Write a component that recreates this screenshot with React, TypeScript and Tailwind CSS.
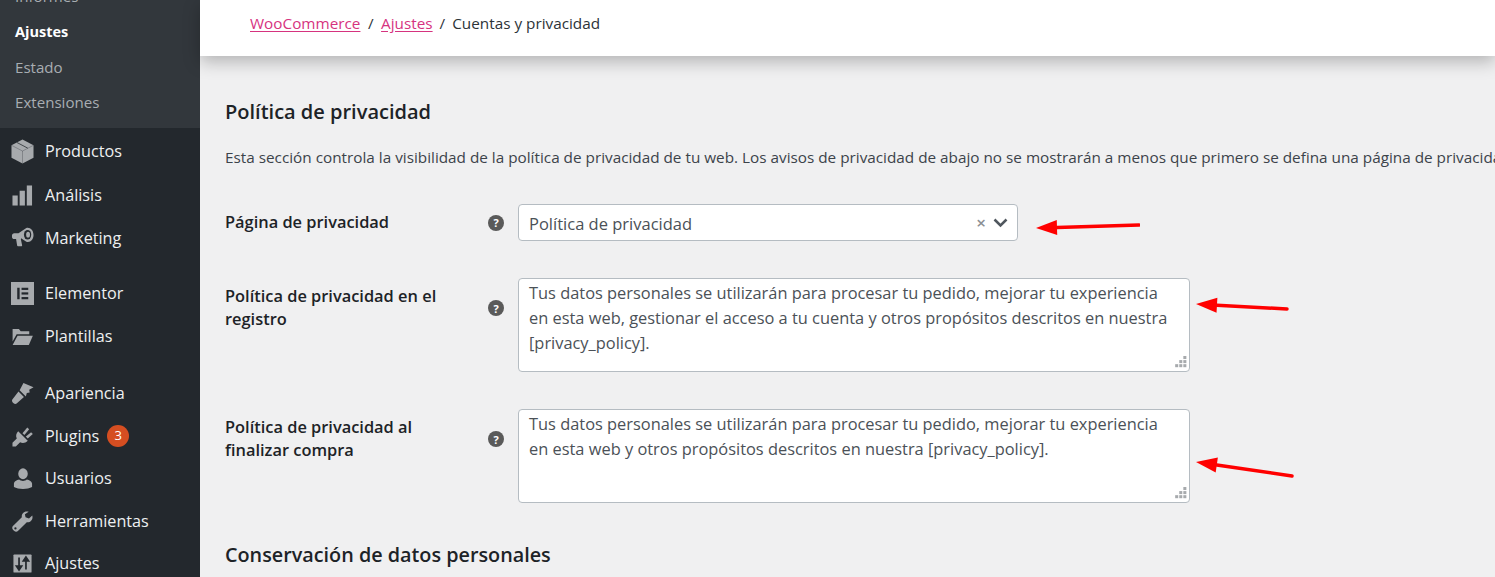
const font = { fontFamily: '"Open Sans", "Noto Sans", sans-serif' }

type IconProps = { className?: string }

function BoxIcon({ className }: IconProps) {
  return (
    <svg viewBox="0 0 24 26" className={className} fill="currentColor">
      <path d="M12 0.500 23.500 6.500V19.500L12 25.500 0.500 19.500V6.500Z" />
      <path d="M0.500 6.500 12 12.500 23.500 6.500M12 12.500V25.500" stroke="#23282d" strokeWidth="0.500" fill="none" opacity="0.6" />
      <path d="M6 3.500 17.500 9.500" stroke="#23282d" strokeWidth="0.800" fill="none" />
    </svg>
  )
}

function BarsIcon({ className }: IconProps) {
  return (
    <svg viewBox="0 0 22 22" className={className} fill="currentColor">
      <rect x="0.500" y="11" width="5.500" height="10.500" />
      <rect x="8" y="6" width="5.500" height="15.500" />
      <rect x="15.500" y="0.500" width="5.500" height="21" />
    </svg>
  )
}

function MegaphoneIcon({ className }: IconProps) {
  return (
    <svg viewBox="0 0 24 24" className={className} fill="currentColor">
      <path d="M1 9.500c0-1.400 1-2.400 2.400-2.400h4.400L16 1.500C20 .5 23.500 4 23.500 8.800s-3.500 8.300-7.500 7L10.500 12.300l-.2 1 1.300 6.200c.1.600-.3 1-.9 1H7.300c-.5 0-.8-.3-.9-.7L5.300 13H3.400C2 13 1 12 1 10.600Z" />
      <ellipse cx="17.300" cy="8.600" rx="3.800" ry="5" fill="#23282d" />
      <ellipse cx="17.800" cy="8.600" rx="2" ry="3" />
    </svg>
  )
}

function ElementorIcon({ className }: IconProps) {
  return (
    <svg viewBox="0 0 24 24" className={className}>
      <rect x="0" y="0" width="24" height="24" fill="currentColor" />
      <rect x="6.500" y="6" width="2.500" height="12" fill="#23282d" />
      <rect x="11" y="6" width="7" height="2.300" fill="#23282d" />
      <rect x="11" y="10.800" width="7" height="2.300" fill="#23282d" />
      <rect x="11" y="15.700" width="7" height="2.300" fill="#23282d" />
    </svg>
  )
}

function FolderIcon({ className }: IconProps) {
  return (
    <svg viewBox="0 0 24 20" className={className} fill="currentColor">
      <path d="M1 1h7l2 2.500h9.500V7H5.500L1 15Z" />
      <path d="M6.500 8.500H23.500L19 19H1Z" />
    </svg>
  )
}

function BrushIcon({ className }: IconProps) {
  return (
    <svg viewBox="0 0 24 24" className={className} fill="currentColor">
      <path d="M13 1 23.500 5.500 19 8l.5 3-3 .5-1 3.500-6.500-6.500Z" />
      <path d="M7.800 10 13.500 15.700 6.200 22.300c-1 .9-2.500.9-3.500-.1l-.9-.9c-1-1-1-2.500 0-3.500Z" />
    </svg>
  )
}

function PlugIcon({ className }: IconProps) {
  return (
    <svg viewBox="0 0 22 22" className={className} fill="currentColor">
      <path d="M6.500 5.500 16.500 15.500c-2.500 2.500-5.500 3-8 1.500L4 21.500H0.500V17.500L5 13C3.700 10.500 4.300 7.700 6.500 5.500Z" />
      <path d="M11 7.500 16 1.500 18 3.500 13 9.500Z" />
      <path d="M14.500 11 20 6.500 21.800 8.500 16.500 13Z" />
    </svg>
  )
}

function UserIcon({ className }: IconProps) {
  return (
    <svg viewBox="0 0 20 22" className={className} fill="currentColor">
      <ellipse cx="10" cy="6" rx="5" ry="5.700" />
      <path d="M0.500 20v-3.500C0.500 14 3.500 12.500 6 12c1.200 1 2.500 1.500 4 1.500s2.800-.5 4-1.500c2.500.5 5.500 2 5.500 4.500V20c-2.500 1.300-5.700 2-9.500 2s-7-.7-9.500-2Z" />
    </svg>
  )
}

function WrenchIcon({ className }: IconProps) {
  return (
    <svg viewBox="0 0 22 22" className={className} fill="currentColor">
      <path d="M15.500 0.500c-3.300 0-5.700 2.800-5.200 6L1 15.800c-1 1-1 2.700 0 3.800l1.400 1.400c1 1 2.800 1 3.800 0l9.300-9.300c3.300.5 6-1.900 6-5.200 0-.7-.1-1.300-.3-1.900L17.800 7.900 14.200 6.600 13.500 3.500 17.500.8C16.900.6 16.200.5 15.500.5Z" />
      <circle cx="3.600" cy="18.300" r="1.200" fill="#23282d" />
    </svg>
  )
}

function SlidersIcon({ className }: IconProps) {
  return (
    <svg viewBox="0 0 22 22" className={className}>
      <rect x="0.500" y="0.500" width="21" height="21" rx="1" fill="currentColor" />
      <path d="M7 4v10M7 18.500 4 14h6Z" stroke="#23282d" strokeWidth="2" fill="#23282d" />
      <path d="M15 18V8M15 3.500 12 8h6Z" stroke="#23282d" strokeWidth="2" fill="#23282d" />
    </svg>
  )
}

function HelpIcon() {
  return (
    <span className="flex h-4 w-4 items-center justify-center rounded-full bg-[#5a5a5a] text-[11px] font-bold leading-none text-white">
      ?
    </span>
  )
}

function Arrow({ className, tip, tail }: { className: string; tip: [number, number]; tail: [number, number] }) {
  // tip/tail in local coordinates, head built from the shaft direction
  const dx = tail[0] - tip[0]
  const dy = tail[1] - tip[1]
  const len = Math.hypot(dx, dy)
  const ux = dx / len
  const uy = dy / len
  const baseX = tip[0] + ux * 21
  const baseY = tip[1] + uy * 21
  const head = `${tip[0]},${tip[1]} ${baseX - uy * 7.500},${baseY + ux * 7.500} ${baseX + uy * 7.500},${baseY - ux * 7.500}`
  return (
    <svg className={className} viewBox="0 0 110 30">
      <line x1={baseX} y1={baseY} x2={tail[0]} y2={tail[1]} stroke="#ff0000" strokeWidth="3.500" strokeLinecap="round" />
      <polygon points={head} fill="#ff0000" />
    </svg>
  )
}

function Grip() {
  return (
    <svg className="absolute bottom-[1px] right-[1px] h-[14px] w-[14px]" viewBox="0 0 12 12" fill="#a7aaad">
      <rect x="8" y="0" width="2.600" height="2.600" />
      <rect x="8" y="3.500" width="2.600" height="2.600" />
      <rect x="4.500" y="3.500" width="2.600" height="2.600" />
      <rect x="8" y="7" width="2.600" height="2.600" />
      <rect x="4.500" y="7" width="2.600" height="2.600" />
      <rect x="1" y="7" width="2.600" height="2.600" />
    </svg>
  )
}

const menu = [
  { label: 'Productos', icon: <BoxIcon className="h-[25px] w-[23px]" />, h: 'h-[44px]' },
  { label: 'Análisis', icon: <BarsIcon className="h-[21px] w-[21px]" />, h: 'h-[44px]' },
  { label: 'Marketing', icon: <MegaphoneIcon className="h-[24px] w-[23px]" />, h: 'h-[42px] mb-[13px]' },
  { label: 'Elementor', icon: <ElementorIcon className="h-[23px] w-[23px]" />, h: 'h-[43px]' },
  { label: 'Plantillas', icon: <FolderIcon className="h-[18px] w-[23px]" />, h: 'h-[43px] mb-[14px]' },
  { label: 'Apariencia', icon: <BrushIcon className="h-[23px] w-[23px]" />, h: 'h-[43px]' },
  { label: 'Plugins', icon: <PlugIcon className="h-[21px] w-[21px]" />, h: 'h-[42px]', badge: '3' },
  { label: 'Usuarios', icon: <UserIcon className="h-[21px] w-[20px]" />, h: 'h-[43px]' },
  { label: 'Herramientas', icon: <WrenchIcon className="h-[21px] w-[21px]" />, h: 'h-[42px]' },
  { label: 'Ajustes', icon: <SlidersIcon className="h-[19px] w-[19px]" />, h: 'h-[43px]' },
]

export default function App() {
  return (
    <div className="flex h-[577px] w-[1495px] overflow-hidden bg-[#f0f0f1] text-[#3c434a]" style={font}>
      <aside className="w-[200px] shrink-0 bg-[#23282d] text-[16.200px]">
        <div className="-mt-[21px] flex h-[149px] flex-col bg-[#32373c] pl-[15px] text-[15.100px] text-[#a8adb2]">
          <div className="flex h-[35px] items-center">Informes</div>
          <div className="flex h-[35px] items-center text-[14.500px] font-bold text-white">Ajustes</div>
          <div className="flex h-[36px] items-center">Estado</div>
          <div className="flex h-[35px] items-center">Extensiones</div>
        </div>
        <nav className="mt-[1px]">
          {menu.map((item) => (
            <div key={item.label} className={`flex items-center text-[#eef0f1] ${item.h}`}>
              <span className="flex w-[45px] justify-center text-[#a7aaad]">{item.icon}</span>
              <span>{item.label}</span>
              {item.badge && (
                <span className="ml-[8px] flex h-[22px] w-[22px] items-center justify-center rounded-full bg-[#d54e21] text-[13px] text-white">
                  {item.badge}
                </span>
              )}
            </div>
          ))}
        </nav>
      </aside>

      <main className="relative min-w-0 flex-1">
        <header className="flex h-[56px] items-center bg-white pb-[10px] pl-[50px] text-[15.300px] text-[#2c3338] shadow-[0_6px_16px_rgba(0,0,0,0.25)]">
          <a className="text-[#d6337f] underline underline-offset-2">WooCommerce</a>
          <span className="mx-[7.500px]">/</span>
          <a className="text-[#d6337f] underline underline-offset-2">Ajustes</a>
          <span className="mx-[7px]">/</span>
          <span>Cuentas y privacidad</span>
        </header>

        <div className="pl-[25px]">
          <h2 className="mt-[41px] text-[20px] font-semibold leading-[30px] text-[#1d2327]">Política de privacidad</h2>
          <p className="mt-[20px] whitespace-nowrap text-[15.300px] leading-[20px] text-[#3c434a]">
            Esta sección controla la visibilidad de la política de privacidad de tu web. Los avisos de privacidad de abajo no se mostrarán a menos que primero se defina una página de privacidad.
          </p>

          <div className="mt-[37px] flex h-[37px] items-center">
            <label className="w-[260px] text-[16.400px] font-semibold text-[#1d2327]">Página de privacidad</label>
            <span className="flex w-[33px] justify-start pl-[3px]"><HelpIcon /></span>
            <div className="flex h-[37px] w-[500px] items-center rounded-[4px] border border-[#b5bcc2] bg-white pl-[10px] pr-[9px] text-[16.500px] text-[#4b5157]">
              <span className="flex-1 pt-[3px]">Política de privacidad</span>
              <span className="mr-[7px] text-[17px] font-semibold leading-none text-[#8c8f94]">×</span>
              <svg className="h-[10px] w-[15px]" viewBox="0 0 15 10" fill="none" stroke="#50575e" strokeWidth="2.500">
                <path d="M1.500 1.500 7.500 7.500 13.500 1.500" />
              </svg>
            </div>
          </div>

          <div className="mt-[37px] flex h-[94px]">
            <label className="w-[260px] pt-[6px] text-[16.400px] font-semibold leading-[23px] text-[#1d2327]">
              Política de privacidad en el
              <br />
              registro
            </label>
            <span className="flex w-[33px] items-start pl-[3px] pt-[22px]"><HelpIcon /></span>
            <div className="relative h-[94px] w-[672px] rounded-[4px] border border-[#b5bcc2] bg-white px-[10px] pt-[1px] text-[16.400px] leading-[25px] text-[#4b5157]">
              Tus datos personales se utilizarán para procesar tu pedido, mejorar tu experiencia
              <br />
              en esta web, gestionar el acceso a tu cuenta y otros propósitos descritos en nuestra
              <br />
              [privacy_policy].
              <Grip />
            </div>
          </div>

          <div className="mt-[37px] flex h-[94px]">
            <label className="w-[260px] pt-[6px] text-[16.400px] font-semibold leading-[23px] text-[#1d2327]">
              Política de privacidad al
              <br />
              finalizar compra
            </label>
            <span className="flex w-[33px] items-start pl-[3px] pt-[22px]"><HelpIcon /></span>
            <div className="relative h-[94px] w-[672px] rounded-[4px] border border-[#b5bcc2] bg-white px-[10px] pt-[1px] text-[16.400px] leading-[25px] text-[#4b5157]">
              Tus datos personales se utilizarán para procesar tu pedido, mejorar tu experiencia
              <br />
              en esta web y otros propósitos descritos en nuestra [privacy_policy].
              <Grip />
            </div>
          </div>

          <h2 className="mt-[37px] text-[19.800px] font-semibold leading-[30px] text-[#1d2327]">Conservación de datos personales</h2>
        </div>

        {/* hand-drawn annotations on top of the form */}
        <Arrow className="absolute left-[830px] top-[211px] h-[30px] w-[110px]" tip={[6, 17]} tail={[109, 14]} />
        <Arrow className="absolute left-[990px] top-[291px] h-[30px] w-[110px]" tip={[6, 13]} tail={[97, 18]} />
        <Arrow className="absolute left-[990px] top-[451px] h-[30px] w-[110px]" tip={[6, 11]} tail={[102, 25]} />
      </main>
    </div>
  )
}
